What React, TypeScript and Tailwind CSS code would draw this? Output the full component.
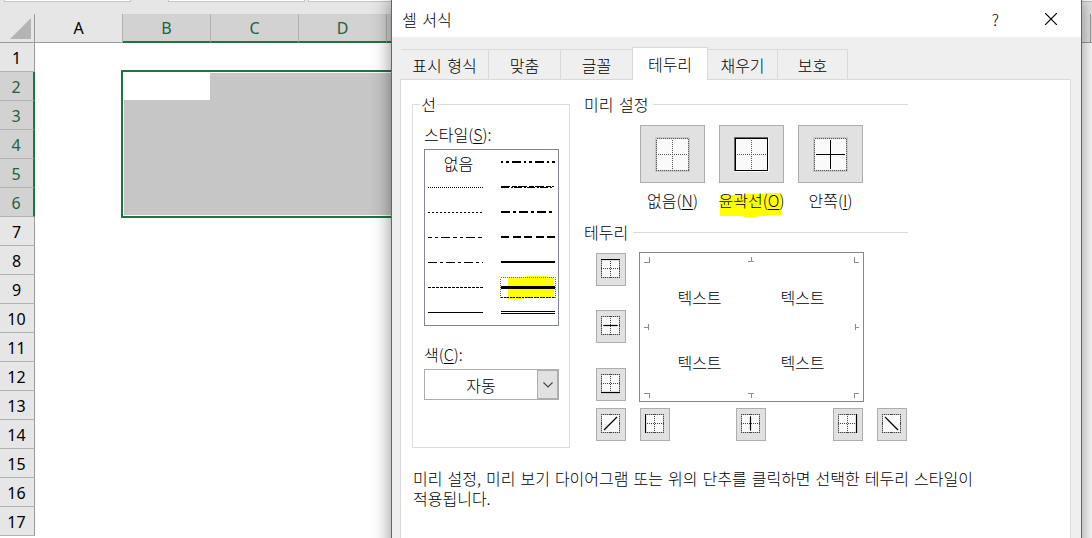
import type { ReactNode } from "react";
import clsx from "clsx";

const columns = [
  { name: "A", width: "w-[88px]", selected: false },
  { name: "B", width: "w-[88px]", selected: true },
  { name: "C", width: "w-[88px]", selected: true },
  { name: "D", width: "w-[88px]", selected: true },
  { name: "E", width: "w-[88px]", selected: true },
];

const rows = Array.from({ length: 17 }, (_, i) => i + 1);

const tabs = [
  { label: "표시 형식", width: "w-[88px]" },
  { label: "맞춤", width: "w-[72px]" },
  { label: "글꼴", width: "w-[71px]" },
  { label: "테두리", width: "w-[76px]", active: true },
  { label: "채우기", width: "w-[70px]" },
  { label: "보호", width: "w-[70px]" },
];

// stroke width and dash pattern of every line style, top to bottom
const thinLines = [
  { dash: "1 1" },
  { dash: "2 2" },
  { dash: "4 3 3 3 9 3" },
  { dash: "9 3 3 3" },
  { dash: "3 1" },
  { dash: "" },
];

const thickLines = [
  { dash: "2 3 3 3 9 3", size: 2 },
  { dash: "9 1 3 1", size: 2, slant: true },
  { dash: "9 3 3 3", size: 2 },
  { dash: "8 3.5", size: 2 },
  { dash: "", size: 2 },
  { dash: "", size: 3, picked: true },
  { dash: "", size: 1, double: true },
];

function Spreadsheet() {
  return (
    <div className="flex h-full w-full flex-col bg-white">
      <div className="flex h-[14px] shrink-0 items-start bg-[#e6e6e6] pl-1">
        <div className="h-[2px] w-[127px] border-x border-b border-[#c4c4c4] bg-white" />
        <div className="ml-[37px] h-[2px] w-[137px] border-x border-b border-[#c4c4c4] bg-white" />
        <div className="ml-[3px] h-[2px] grow border-l border-b border-[#c4c4c4] bg-white" />
      </div>
      <div className="flex h-[29px] shrink-0 bg-[#e6e6e6]">
        <div className="flex w-[35px] shrink-0 border-r border-b border-[#9b9b9b]">
          <svg className="ml-[10px] mt-1" width="21" height="21">
            <path d="M21 0V21H0Z" fill="#b4b4b4" />
          </svg>
        </div>
        {columns.map((col) => (
          <div
            key={col.name}
            className={clsx(
              "flex shrink-0 items-center justify-center border-r text-[16px]",
              col.width,
              col.selected
                ? "border-r-[#b1b1b1] border-b-2 border-b-[#217346] bg-[#d2d2d2] text-[#1f6141]"
                : "border-r-[#b1b1b1] border-b border-b-[#9b9b9b]"
            )}
          >
            {col.name}
          </div>
        ))}
        <div className="w-[616px] shrink-0 border-r border-b border-[#9b9b9b]" />
        <div className="grow border-b border-[#9b9b9b]" />
      </div>
      <div className="flex flex-col">
        {rows.map((row) => (
          <div
            key={row}
            className={clsx(
              "flex h-[29px] w-[35px] shrink-0 items-center justify-center border-b pt-0.5 pr-px text-[16px]",
              row >= 2 && row <= 6
                ? "border-r-2 border-r-[#217346] border-b-[#b1b1b1] bg-[#d2d2d2] text-[#1f6141]"
                : "border-r border-r-[#9b9b9b] border-b-[#b1b1b1] bg-[#e6e6e6]"
            )}
          >
            {row}
          </div>
        ))}
      </div>
      <div className="absolute left-[121px] top-[70px] h-[148px] w-[400px] border-2 border-[#217346] bg-white p-px">
        <div className="h-full bg-[#c6c6c6]">
          <div className="h-[27px] w-[86px] bg-white" />
        </div>
      </div>
    </div>
  );
}

function LineList() {
  return (
    <div className="flex h-[177px] w-[135px] border border-[#828790]">
      <div className="flex w-[62px] flex-col pl-[3px]">
        <div className="flex h-[25px] items-center justify-center pl-[2px]">없음</div>
        {thinLines.map((line, i) => (
          <svg key={i} className="h-[25px] w-[55px]" shapeRendering="crispEdges">
            <path d="M0 12.5H55" stroke="#000" strokeDasharray={line.dash} />
          </svg>
        ))}
      </div>
      <div className="ml-[13px] flex flex-col">
        {thickLines.map((line, i) => (
          <svg key={i} className="h-[25px] w-[57px]" shapeRendering="crispEdges">
            {line.picked && (
              <>
                <path d="M8 2H26V1H47V2H54V22H24V24H8Z" fill="#ff0" />
                <rect x="0.5" y="2.5" width="55" height="20" fill="none" stroke="#666" strokeDasharray="1 1" />
                <path d="M1 22.5H55" stroke="#000" strokeDasharray="2 1" />
              </>
            )}
            {line.double ? (
              <path d="M1 11.5H55M1 13.5H55" stroke="#000" />
            ) : line.slant ? (
              <>
                <path d="M1 11.5H54" stroke="#000" strokeDasharray="9 2 5 1" />
                <path d="M1 12.5H53" stroke="#000" strokeDasharray="8 2 2 1" />
              </>
            ) : (
              <path
                d={line.size === 3 ? "M1 12.5H55" : "M1 12H55"}
                stroke="#000"
                strokeWidth={line.size}
                strokeDasharray={line.dash}
              />
            )}
          </svg>
        ))}
      </div>
    </div>
  );
}

function PresetIcon({ kind }: { kind: "none" | "outline" | "inside" }) {
  return (
    <svg width="35" height="35" shapeRendering="crispEdges">
      <rect x="0.5" y="0.5" width="34" height="34" fill="#fafafa" />
      {kind === "outline" ? (
        <>
          <path d="M0 1H34M1 0V34" stroke="#666" strokeWidth="2" />
          <path d="M1 1.5H34M1.5 1V34M33.5 1V34M1 33.5H34" fill="none" stroke="#000" />
        </>
      ) : (
        <>
          <rect x="1" y="1" width="33" height="33" fill="none" stroke="#c9c9c9" strokeWidth="2" />
          <rect x="1.5" y="1.5" width="32" height="32" fill="none" stroke="#555" strokeDasharray="1 1" />
        </>
      )}
      {kind === "inside" ? (
        <path d="M3 17.5H32M17.5 3V32" stroke="#000" />
      ) : (
        <path d="M3 17.5H32M17.5 3V32" stroke="#555" strokeDasharray="1 1" />
      )}
    </svg>
  );
}

function BorderButton({ line, className }: { line: string; className?: string }) {
  return (
    <button
      className={clsx(
        "flex h-[33px] w-[30px] shrink-0 justify-center border border-[#adadad] bg-[#e1e1e1] pt-[5px]",
        className
      )}
    >
      <svg width="20" height="20">
        <g shapeRendering="crispEdges">
          <rect x="0" y="0" width="19" height="19" fill="#fafafa" />
          <path d="M.5 0V19M18.5 0V19M0 .5H19M0 18.5H19" stroke="#b5b5b5" />
          <path
            d="M.5 0V19M18.5 0V19M0 .5H19M0 18.5H19M9.5 0V19M0 9.5H19"
            stroke="#444"
            strokeDasharray="1 1"
          />
        </g>
        {line.includes("L") && <rect x="1" y="1" width="17" height="17" fill="#fafafa" />}
        <path d={line} stroke="#000" strokeWidth="1.2" />
      </svg>
    </button>
  );
}

function PresetButton({ kind, children }: { kind: "none" | "outline" | "inside"; children: ReactNode }) {
  return (
    <div className="flex w-[65px] flex-col items-center">
      <button className="flex h-[58px] w-[65px] items-center justify-center border border-[#adadad] bg-[#e1e1e1]">
        <PresetIcon kind={kind} />
      </button>
      <div className="mt-[6px] flex h-[22px] items-center whitespace-nowrap">{children}</div>
    </div>
  );
}

function SectionTitle({ children }: { children: ReactNode }) {
  return (
    <div className="flex h-5 w-[324px] items-center gap-[5px] whitespace-nowrap">
      <span className="[word-spacing:2px]">{children}</span>
      <div className="h-px grow bg-[#dcdcdc]" />
    </div>
  );
}

function Preview() {
  return (
    <div className="relative ml-[13px] h-[150px] w-[225px] border border-[#828790]">
      <svg className="absolute inset-0" width="223" height="148" shapeRendering="crispEdges">
        <path
          d="M4 9.5H10M9.5 4V10M108 8.5H114M111.5 4V9M219 9.5H214M214.5 4V10M4 74.5H9M8.5 71V77M219 74.5H215M215.5 71V77M4 140.5H10M9.5 140V145M108 140.5H114M111.5 140V145M219 140.5H214M214.5 140V145"
          stroke="#8c8c8c"
        />
      </svg>
      <div className="grid h-full grid-cols-2 grid-rows-[65px_65px] justify-center pl-2 pr-[9px] pt-[11px] text-center">
        <span className="flex items-center justify-center">텍스트</span>
        <span className="flex items-center justify-center">텍스트</span>
        <span className="flex items-center justify-center">텍스트</span>
        <span className="flex items-center justify-center">텍스트</span>
      </div>
    </div>
  );
}

function FormatDialog() {
  return (
    <div className="absolute -top-px left-[391px] flex h-[560px] w-[691px] flex-col border border-[#666] bg-[#efefef] shadow-[0_0_18px_rgba(0,0,0,0.45)]">
      <div className="flex h-[37px] shrink-0 items-center bg-white pl-[10px]">
        <span className="[word-spacing:2px]">셀 서식</span>
        <span className="ml-auto mr-[46px] text-[16px]">?</span>
        <svg className="mr-[24px]" width="12" height="12">
          <path d="M0 0L12 12M12 0L0 12" stroke="#000" strokeWidth="1.2" />
        </svg>
      </div>
      <div className="flex h-[42px] shrink-0 items-end pl-[9px]">
        {tabs.map((tab, i) => (
          <div
            key={tab.label}
            className={clsx(
              "flex shrink-0 items-center justify-center border-[#d9d9d9] [word-spacing:2px]",
              tab.width,
              tab.active
                ? "relative z-10 -mb-px h-[33px] border-x border-t bg-white pb-px"
                : "h-[30px] border-t bg-[#efefef]",
              !tab.active && tabs[i + 1] && !tabs[i + 1].active && "border-r",
              i === tabs.length - 1 && "border-r"
            )}
          >
            {tab.label}
          </div>
        ))}
      </div>
      <div className="ml-2 flex h-[480px] w-[671px] shrink-0 flex-col border border-[#d9d9d9] bg-white">
        <div className="flex pl-[11px]">
          <div className="mt-6 flex h-[344px] w-[158px] flex-col border border-[#dcdcdc] pl-[11px]">
            <div className="-ml-1 -mt-[11px] flex h-5 w-[17px] items-center justify-center bg-white">선</div>
            <div className="mt-[10px] flex h-5 items-center">
              스타일(<u className="underline-offset-2">S</u>):
            </div>
            <div className="mt-[5px]">
              <LineList />
            </div>
            <div className="mt-[18px] flex h-5 items-center">
              색(<u className="underline-offset-2">C</u>):
            </div>
            <div className="mt-[5px] flex h-[31px] w-[135px] border border-[#adadad]">
              <div className="flex grow items-center justify-center">자동</div>
              <div className="flex w-[21px] items-center justify-center border border-[#adadad] bg-[#e1e1e1]">
                <svg width="10" height="6">
                  <path d="M.5 .5L5 5L9.5 .5" fill="none" stroke="#444" strokeWidth="1.1" />
                </svg>
              </div>
            </div>
          </div>
          <div className="ml-[14px] flex flex-col pt-[14px]">
            <SectionTitle>미리 설정</SectionTitle>
            <div className="mt-[11px] flex gap-[14px] pl-14">
              <PresetButton kind="none">
                없음(<u className="underline-offset-2">N</u>)
              </PresetButton>
              <PresetButton kind="outline">
                <div className="relative flex">
                  <svg className="absolute left-[1px] top-[3px]" width="63" height="24">
                    <path d="M0 2H26V1H44V0H61V22H47V23H37V24H24V23H0Z" fill="#ff0" />
                  </svg>
                  <span className="relative">
                    윤곽선(<u className="underline-offset-2">O</u>)
                  </span>
                </div>
              </PresetButton>
              <PresetButton kind="inside">
                안쪽(<u className="underline-offset-2">I</u>)
              </PresetButton>
            </div>
            <div className="mt-[11px]">
              <SectionTitle>테두리</SectionTitle>
            </div>
            <div className="mt-[10px] flex pl-3">
              <div className="flex flex-col pt-px">
                <BorderButton line="M0 .5H19" />
                <BorderButton className="mt-6" line="M3 9.5H16" />
                <BorderButton className="mt-[25px]" line="M0 18.5H19" />
              </div>
              <Preview />
            </div>
            <div className="mt-[6px] flex pl-3">
              <BorderButton line="M3 16L16 3" />
              <BorderButton className="ml-[14px]" line="M.5 0V19" />
              <BorderButton className="ml-[66px]" line="M9.5 3V16" />
              <BorderButton className="ml-[67px]" line="M18.5 0V19" />
              <BorderButton className="ml-[14px]" line="M3 3L16 16" />
            </div>
          </div>
        </div>
        <p className="mt-[20px] pl-3 leading-5 [word-spacing:1.5px]">
          미리 설정, 미리 보기 다이어그램 또는 위의 단추를 클릭하면 선택한 테두리 스타일이
          <br />
          적용됩니다.
        </p>
      </div>
    </div>
  );
}

export default function App() {
  return (
    <div className="relative h-[538px] w-[1092px] overflow-hidden font-['Noto_Sans','Noto_Sans_CJK_KR',sans-serif] text-[16px] leading-5 text-black">
      <Spreadsheet />
      <div className="absolute inset-0 font-['Noto_Sans_CJK_KR',sans-serif] font-light">
        <FormatDialog />
      </div>
    </div>
  );
}
